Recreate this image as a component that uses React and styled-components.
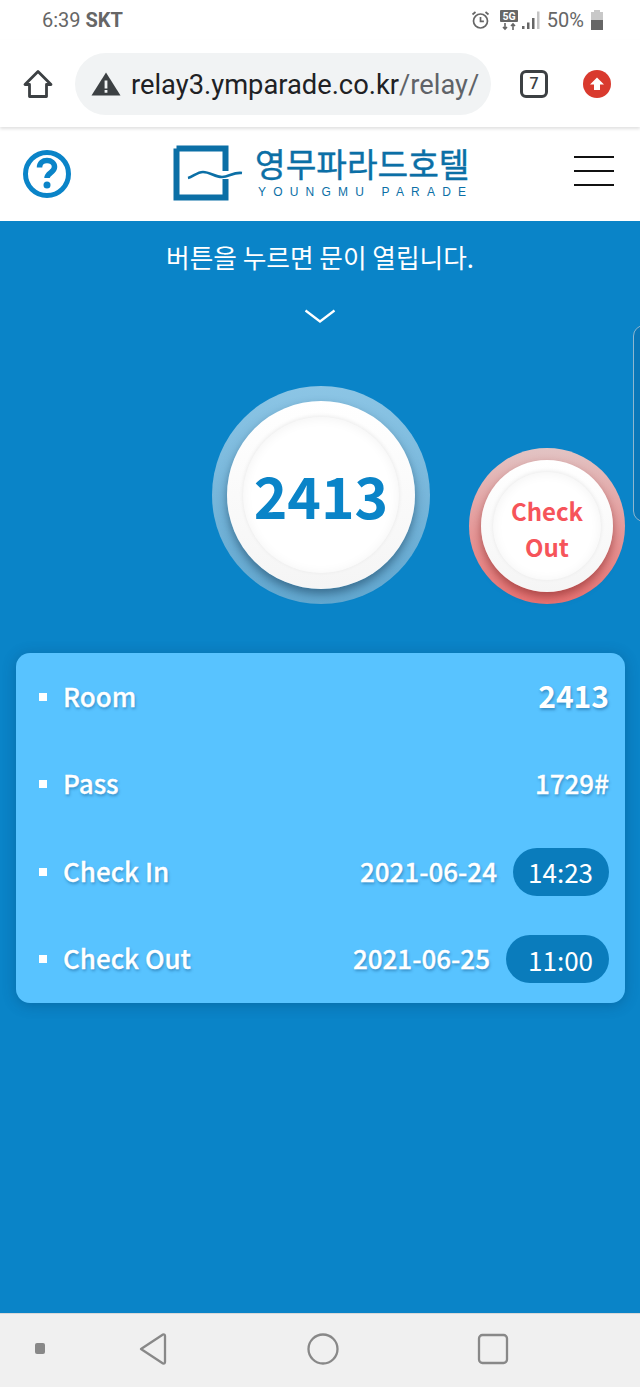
import styled, { createGlobalStyle } from 'styled-components';

const rows = [
  { label: 'Room', value: '2413', big: true },
  { label: 'Pass', value: '1729#' },
  { label: 'Check In', value: '2021-06-24', time: '14:23' },
  { label: 'Check Out', value: '2021-06-25', time: '11:00', wide: true },
];

export default function App() {
  return (
    <>
      <GlobalStyle />
      <Page>
        <StatusBar>
          <Clock>
            6:39 <b>SKT</b>
          </Clock>
          <StatusIcons>
            <svg width="19" height="20" viewBox="0 0 19 20" fill="none" stroke="#666" strokeWidth="1.7">
              <circle cx="9.5" cy="11" r="7" />
              <path d="M9.5 7v4.4h3.4M1.5 4.5 4.5 2M17.5 4.5 14.5 2" />
            </svg>
            <svg width="20" height="22" viewBox="0 0 20 22">
              <rect x="1" y="1" width="18" height="12" rx="1" fill="#666" />
              <text x="10" y="11" textAnchor="middle" fontSize="10.5" fontWeight="700" fontFamily="Roboto" fill="#fff">5G</text>
              <path d="M6 14v6M4 18l2 2 2-2M14 21v-6M12 17l2-2 2 2" fill="none" stroke="#666" strokeWidth="1.6" />
            </svg>
            <svg width="20" height="20" viewBox="0 0 20 20">
              <rect x="1" y="16" width="2.5" height="3" fill="#666" />
              <rect x="6" y="12.5" width="2.5" height="6.5" fill="#666" />
              <rect x="11" y="8" width="2.5" height="11" fill="#666" />
              <rect x="16" y="1.5" width="2.5" height="17.5" fill="#c4c4c4" />
            </svg>
            <Battery>50%</Battery>
            <svg width="14" height="22" viewBox="0 0 14 22">
              <path d="M4 1h6v2h3v18H1V3h3z" fill="#c8c8c8" />
              <path d="M1 11h12v10H1z" fill="#666" />
            </svg>
          </StatusIcons>
        </StatusBar>

        <BrowserBar>
          <svg width="30" height="30" viewBox="0 0 30 30" fill="none" stroke="#3c4043" strokeWidth="2.8" strokeLinejoin="round">
            <path d="M15 2.5 2 15.5h4.5v12h17v-12H28z" />
          </svg>
          <AddressBox>
            <svg width="30" height="24" viewBox="0 0 30 24">
              <path d="M15 .5 29.5 23.5H.5z" fill="#3c4043" />
              <path d="M13.6 8.5h2.8v8h-2.8zM13.6 18h2.8v2.8h-2.8z" fill="#f1f3f4" />
            </svg>
            <Url>
              relay3.ymparade.co.kr<span>/relay/</span>
            </Url>
          </AddressBox>
          <TabCount>7</TabCount>
          <svg width="28" height="28" viewBox="0 0 28 28">
            <circle cx="14" cy="14" r="14" fill="#d93a2e" />
            <path d="M14 7.5 21 14.5h-4V20h-6v-5.500H7z" fill="#fff" />
          </svg>
        </BrowserBar>

        <SiteHeader>
          <svg width="48" height="48" viewBox="0 0 48 48" fill="none" stroke="#0a84c8">
            <circle cx="24" cy="24" r="21.500" strokeWidth="5" />
            <path d="M16.500 17.500c0-4.500 3.300-7 7.500-7s7.500 2.600 7.500 6.500c0 5.600-7.500 5.700-7.500 11" strokeWidth="5.500" />
            <circle cx="24" cy="35" r="3.500" fill="#0a84c8" stroke="none" />
          </svg>
          <Logo>
            <svg width="70" height="56" viewBox="0 0 70 56" fill="none">
              <path d="M3.500 3.500h49v22.500M52.500 34v18.500h-49v-49" stroke="#0b6fa6" strokeWidth="6" />
              <path d="M15 33c5-1 9-6 15-6 7 0 12 5 19 5 7 0 11-5 20-4" stroke="#0b6fa6" strokeWidth="2.600" />
            </svg>
            <LogoText>
              <LogoTitle>영무파라드호텔</LogoTitle>
              <LogoSub>YOUNGMU PARADE</LogoSub>
            </LogoText>
          </Logo>
          <Burger>
            <i />
            <i />
            <i />
          </Burger>
        </SiteHeader>

        <Main>
          <Handle />
          <Notice>버튼을 누르면 문이 열립니다.</Notice>
          <ChevronWrap>
            <svg width="32" height="15" viewBox="0 0 32 15" fill="none" stroke="#fff" strokeWidth="2.200">
              <path d="M1.500 1.500 16 12.500 30.500 1.500" />
            </svg>
          </ChevronWrap>

          <Buttons>
            <Ring $size={218} $pad={15} $top="#8cc5e5" $bottom="#63a8d0">
              <Face $pad={16} $shadow="rgba(20,60,90,.55)">
                <Disc>
                  <RoomNumber>2413</RoomNumber>
                </Disc>
              </Face>
            </Ring>
            <Ring $size={156} $pad={12} $top="#e2c4c4" $bottom="#ea7474">
              <Face $pad={12} $shadow="rgba(120,30,30,.55)">
                <Disc>
                  <CheckOutLabel>
                    Check
                    <br />
                    Out
                  </CheckOutLabel>
                </Disc>
              </Face>
            </Ring>
          </Buttons>

          <InfoCard>
            {rows.map((row) => (
              <InfoRow key={row.label}>
                <Bullet />
                <Label>{row.label}</Label>
                <Value $big={row.big}>{row.value}</Value>
                {row.time && <TimePill $wide={row.wide}>{row.time}</TimePill>}
              </InfoRow>
            ))}
          </InfoCard>
        </Main>

        <NavBar>
          <NavDot />
          <svg width="30" height="32" viewBox="0 0 30 32" fill="none" stroke="#888" strokeWidth="2.300" strokeLinejoin="round">
            <path d="M3 16 25 1.500Q27 1 27 3v26q0 2-2 1.500z" />
          </svg>
          <svg width="32" height="32" viewBox="0 0 32 32" fill="none" stroke="#888" strokeWidth="2.300">
            <circle cx="16" cy="16" r="14.500" />
          </svg>
          <svg width="32" height="32" viewBox="0 0 32 32" fill="none" stroke="#888" strokeWidth="2.300">
            <rect x="2" y="2" width="28" height="28" rx="3.500" />
          </svg>
        </NavBar>
      </Page>
    </>
  );
}

const GlobalStyle = createGlobalStyle`
  html, body {
    margin: 0;
    padding: 0;
    background: #fff;
  }
`;

const cjk = `'Noto Sans CJK KR', 'Noto Sans', sans-serif`;

const Page = styled.div`
  width: 640px;
  height: 1387px;
  display: flex;
  flex-direction: column;
  overflow: hidden;
  font-family: ${cjk};
`;

const StatusBar = styled.div`
  height: 40px;
  flex: none;
  display: flex;
  align-items: center;
  justify-content: space-between;
  padding: 0 36px 0 42px;
  font-family: Roboto, sans-serif;
  color: #666;
`;

const Clock = styled.div`
  font-size: 20px;

  b {
    font-weight: 700;
  }
`;

const StatusIcons = styled.div`
  display: flex;
  align-items: center;
  gap: 6px;

  svg:nth-of-type(1) {
    margin-right: 3px;
  }

  svg:nth-of-type(2) {
    margin-right: -4px;
  }

  svg:nth-of-type(3) {
    margin-right: -1px;
  }
`;

const Battery = styled.span`
  font-size: 20px;
  margin-left: 1px;
`;

const BrowserBar = styled.div`
  position: relative;
  z-index: 2;
  height: 87px;
  flex: none;
  display: flex;
  align-items: center;
  padding: 0 29px 0 23px;
  background: #fff;
  box-shadow: 0 2px 3px rgba(0, 0, 0, 0.12);
`;

const AddressBox = styled.div`
  width: 416px;
  height: 62px;
  margin: 0 29px 0 22px;
  padding-left: 16px;
  box-sizing: border-box;
  display: flex;
  align-items: center;
  gap: 10px;
  background: #f1f3f4;
  border-radius: 31px;
`;

const Url = styled.div`
  font-family: Roboto, sans-serif;
  font-size: 27.300px;
  padding-top: 2px;
  color: #202124;
  white-space: nowrap;

  span {
    color: #5f6368;
  }
`;

const TabCount = styled.div`
  width: 28px;
  height: 28px;
  margin-right: 35px;
  box-sizing: border-box;
  display: flex;
  align-items: center;
  justify-content: center;
  border: 3px solid #3c4043;
  border-radius: 6px;
  font-family: Roboto, sans-serif;
  font-size: 16px;
  font-weight: 500;
  color: #3c4043;
`;

const SiteHeader = styled.header`
  height: 94px;
  flex: none;
  display: flex;
  align-items: center;
  padding: 0 26px 0 23px;
  box-sizing: border-box;
  background: #fff;
`;

const Logo = styled.div`
  display: flex;
  align-items: center;
  gap: 12px;
  margin-left: 102px;
  margin-right: auto;
  margin-bottom: 3px;
`;

const LogoText = styled.div`
  display: flex;
  flex-direction: column;
  width: 216px;
`;

const LogoTitle = styled.div`
  font-size: 33.300px;
  line-height: 36px;
  -webkit-text-stroke: 0.4px #0b6fa6;
  color: #0b6fa6;
  white-space: nowrap;
`;

const LogoSub = styled.div`
  font-family: 'Liberation Sans', sans-serif;
  font-size: 12px;
  line-height: 15px;
  margin-top: 4px;
  padding-left: 3px;
  letter-spacing: 7.200px;
  color: #0b6fa6;
  white-space: nowrap;
`;

const Burger = styled.div`
  width: 40px;
  display: flex;
  flex-direction: column;
  gap: 12px;
  margin-bottom: 6px;

  i {
    display: block;
    height: 2px;
    background: #111;
  }
`;

const Main = styled.main`
  position: relative;
  flex: 1;
  display: flex;
  flex-direction: column;
  background: #0a84c8;
`;

const Handle = styled.div`
  position: absolute;
  top: 104px;
  left: 633px;
  width: 20px;
  height: 195px;
  border: 1px solid #8fb6cf;
  border-radius: 12px;
  background: rgba(10, 100, 160, 0.4);
`;

const Notice = styled.div`
  margin-top: 17px;
  text-align: center;
  font-size: 25.700px;
  line-height: 38px;
  color: #fff;
`;

const ChevronWrap = styled.div`
  display: flex;
  justify-content: center;
  margin-top: 33px;
  height: 15px;
`;

const Buttons = styled.div`
  display: flex;
  align-items: flex-end;
  gap: 39px;
  margin-top: 62px;
  padding-left: 212px;
`;

const Ring = styled.div`
  width: ${(p) => p.$size}px;
  height: ${(p) => p.$size}px;
  padding: ${(p) => p.$pad}px;
  box-sizing: border-box;
  border-radius: 50%;
  background: linear-gradient(${(p) => p.$top}, ${(p) => p.$bottom});
`;

const Face = styled.div`
  width: 100%;
  height: 100%;
  padding: ${(p) => p.$pad}px;
  box-sizing: border-box;
  border-radius: 50%;
  background: linear-gradient(#fff, #f5f5f5);
  box-shadow: 0 5px 10px ${(p) => p.$shadow};
`;

const Disc = styled.div`
  width: 100%;
  height: 100%;
  display: flex;
  align-items: center;
  justify-content: center;
  border-radius: 50%;
  background: #fff;
  box-shadow: 0 -1px 4px rgba(0, 0, 0, 0.08), inset 0 1px 12px rgba(0, 0, 0, 0.05);
`;

const RoomNumber = styled.div`
  font-size: 57px;
  font-weight: 700;
  line-height: 1;
  margin-bottom: 2px;
  color: #0a84c8;
`;

const CheckOutLabel = styled.div`
  font-size: 24px;
  font-weight: 700;
  line-height: 36px;
  padding-top: 6px;
  text-align: center;
  color: #f6545a;
`;

const InfoCard = styled.section`
  width: 609px;
  height: 350px;
  margin: 49px 0 0 16px;
  padding: 0 16px 0 23px;
  box-sizing: border-box;
  display: flex;
  flex-direction: column;
  background: #58c3ff;
  border-radius: 14px;
  box-shadow: 0 2px 14px rgba(0, 50, 90, 0.3);
`;

const InfoRow = styled.div`
  flex: 1;
  display: flex;
  align-items: center;
  color: #fff;
  text-shadow: 1px 2px 3px rgba(0, 60, 110, 0.4);
`;

const Bullet = styled.span`
  width: 8px;
  height: 8px;
  margin-right: 16px;
  background: #fff;
`;

const Label = styled.span`
  flex: 1;
  margin-bottom: 3px;
  font-size: 26px;
  font-weight: 500;
  -webkit-text-stroke: 0.3px #fff;
`;

const Value = styled.span`
  margin-bottom: 3px;
  font-size: ${(p) => (p.$big ? 30 : 26)}px;
  font-weight: ${(p) => (p.$big ? 700 : 500)};
  -webkit-text-stroke: ${(p) => (p.$big ? 0 : 0.3)}px #fff;
`;

const TimePill = styled.span`
  height: 48px;
  width: ${(p) => (p.$wide ? 103 : 96)}px;
  margin-left: 16px;
  padding-right: 16px;
  box-sizing: border-box;
  display: flex;
  align-items: center;
  justify-content: flex-end;
  border-radius: 24px;
  background: #0a7cbc;
  font-size: 26px;
  text-shadow: none;
`;

const NavBar = styled.nav`
  height: 74px;
  flex: none;
  display: flex;
  align-items: center;
  padding: 0 0 4px 35px;
  box-sizing: border-box;
  background: #f0f0f0;
  border-top: 1px solid #d8d8d8;

  svg:nth-of-type(1) {
    margin-left: 93px;
  }

  svg:nth-of-type(2) {
    margin-left: 139px;
  }

  svg:nth-of-type(3) {
    margin-left: 138px;
  }
`;

const NavDot = styled.span`
  width: 10px;
  height: 11px;
  background: #888;
  border-radius: 2px;
`;
